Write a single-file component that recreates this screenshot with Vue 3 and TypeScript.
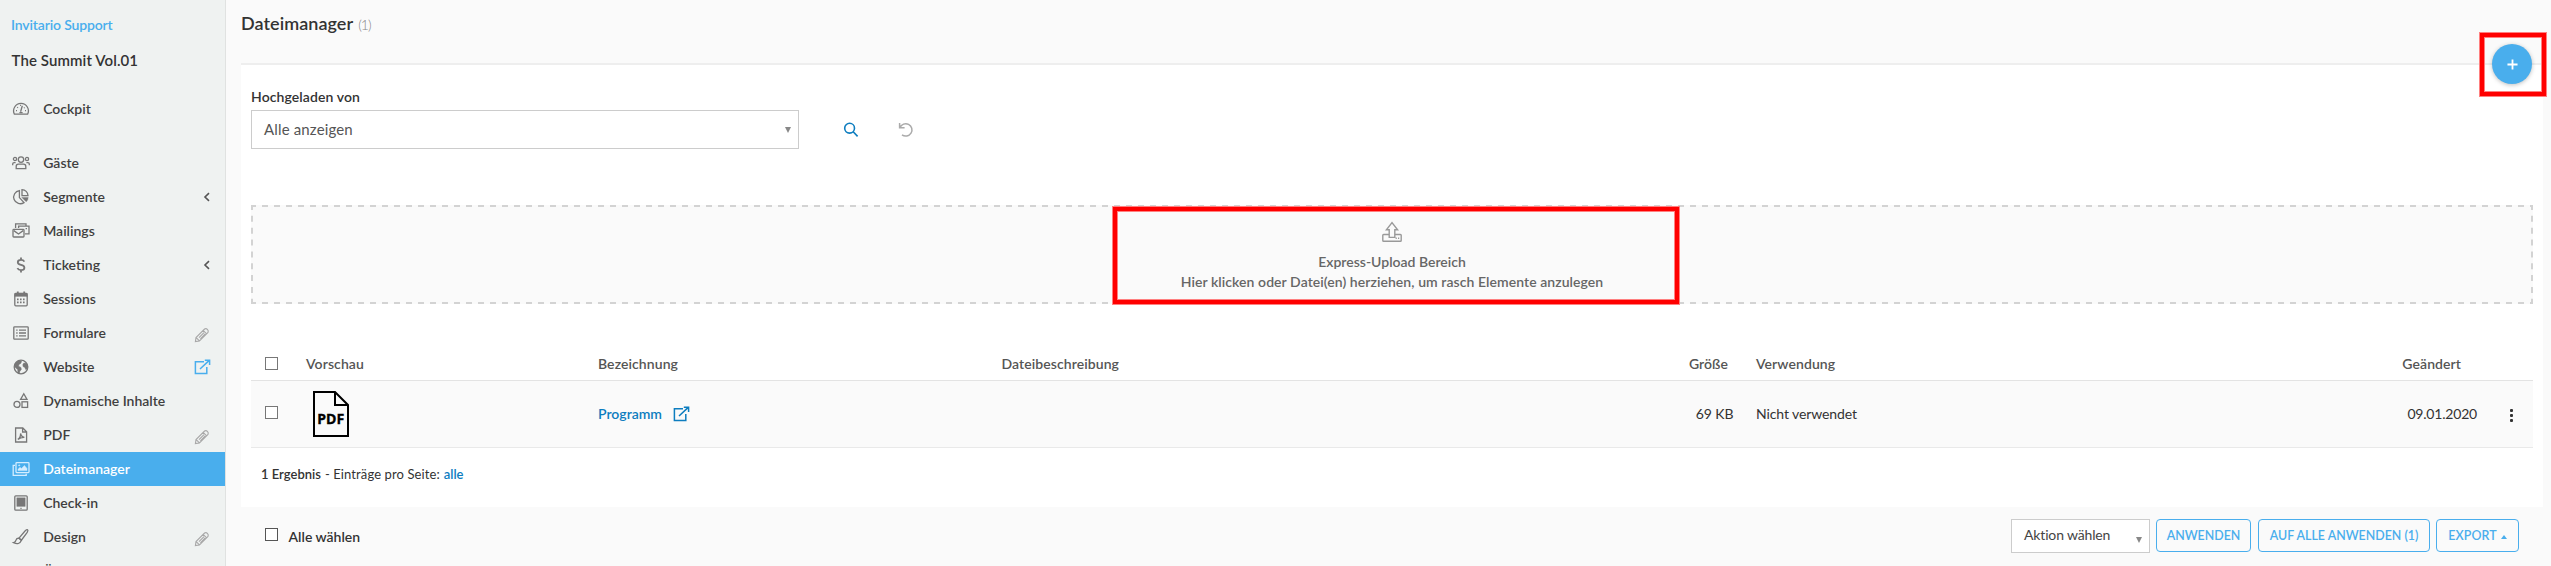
<script setup lang="ts">
interface NavItem {
  label: string
  icon: string
  tail?: 'chevron' | 'pencil' | 'external'
  active?: boolean
}

const nav: NavItem[] = [
  { label: 'Gäste', icon: 'guests' },
  { label: 'Segmente', icon: 'pie', tail: 'chevron' },
  { label: 'Mailings', icon: 'mail' },
  { label: 'Ticketing', icon: 'dollar', tail: 'chevron' },
  { label: 'Sessions', icon: 'calendar' },
  { label: 'Formulare', icon: 'form', tail: 'pencil' },
  { label: 'Website', icon: 'globe', tail: 'external' },
  { label: 'Dynamische Inhalte', icon: 'shapes' },
  { label: 'PDF', icon: 'pdf', tail: 'pencil' },
  { label: 'Dateimanager', icon: 'images', active: true },
  { label: 'Check-in', icon: 'tablet' },
  { label: 'Design', icon: 'brush', tail: 'pencil' },
  { label: 'Ü', icon: '' },
]
</script>

<template>
  <div class="app">
    <aside class="sidebar">
      <div class="account">Invitario Support</div>
      <div class="event">The Summit Vol.01</div>
      <div class="item cockpit">
        <svg class="ico" viewBox="0 0 18 18">
          <path d="M2.4 14.2A7.4 7.4 0 1 1 15.6 14.2Z" />
          <path d="M8.6 11.8 10.3 5.8M7.4 12.6h3.2M4 10.6h1M5.2 7.2l.8.6M8 5.3h.9M12.6 7.4l-.6.5M13 10.6h1" />
        </svg>
        <span>Cockpit</span>
      </div>
      <nav>
        <div v-for="item in nav" :key="item.label" class="item" :class="{ active: item.active }">
          <svg class="ico" viewBox="0 0 18 18">
            <g v-if="item.icon === 'guests'">
              <circle cx="9" cy="5.6" r="2.7" />
              <circle cx="3" cy="5" r="1.6" /><circle cx="15" cy="5" r="1.6" />
              <path d="M4.2 14.6v-2.2q0-2.2 2.2-2.2h5.2q2.2 0 2.2 2.2v2.2ZM.7 11.2V10q0-1.4 1.4-1.4h1.5M17.3 11.2V10q0-1.4-1.4-1.4h-1.5" />
            </g>
            <g v-else-if="item.icon === 'pie'">
              <path d="M7.4 2.6A6.6 6.6 0 1 0 12 14.6L7.4 9.6Z" />
              <path d="M10 1.6A6.2 6.2 0 0 1 16 7.6H10Z" />
              <path class="solid" d="M9.8 9.4h6.4a6.4 6.4 0 0 1-2 4.4Z" />
            </g>
            <g v-else-if="item.icon === 'mail'">
              <path d="M3.6 6V1.8H14V4M6.6 6V4.2H17v7.6h-4" />
              <rect x="1" y="7.4" width="11" height="7.6" rx=".8" />
              <path d="M1.8 8.6 6.5 12l4.7-3.4M13.6 6.6h1.4" />
            </g>
            <g v-else-if="item.icon === 'dollar'" class="bold">
              <path d="M12.4 5.6Q11.4 3.8 9 3.8 5.8 3.8 5.8 6.2 5.8 8.2 9 8.9 12.4 9.6 12.4 11.8 12.4 14.2 9 14.2 6.4 14.2 5.4 12.2M9 1.6v2.2M9 14.2v2.4" />
            </g>
            <g v-else-if="item.icon === 'calendar'">
              <rect x="2.8" y="3.4" width="12.4" height="12.4" rx="1" />
              <path class="solid" d="M2.8 3.4h12.4v3H2.8Z" />
              <path d="M5.8 1.4v3M12.2 1.4v3" class="bold" />
              <path class="dots" d="M5 9.4h8M5 12.4h8" />
            </g>
            <g v-else-if="item.icon === 'form'">
              <rect x="1.8" y="2.8" width="14.4" height="12.4" rx=".8" />
              <path d="M4.2 6.2h1.4M4.2 9h1.4M4.2 11.8h1.4M7 6.2h7M7 9h7M7 11.8h7" />
            </g>
            <g v-else-if="item.icon === 'globe'">
              <circle cx="9" cy="9" r="6.8" />
              <path class="solid" d="M3 5.4 6.4 2.6 9.6 3 9 5.2 7 6.6 6.6 8.2 9 9.4 9.4 11.4 7.8 13.4 7.4 15.6 6 14.8 5.6 11.6 3.2 9.4 2.4 7.6ZM11.8 5 14.6 5.2 15.8 8 15 11 13.6 11.4 12.8 9.4 11 8.6 10.8 6.6Z" />
            </g>
            <g v-else-if="item.icon === 'shapes'">
              <path d="M11.8 1.8 15 7.4H8.6Z" />
              <circle cx="5" cy="12.4" r="3" />
              <rect x="10" y="9.8" width="5.6" height="5.6" />
            </g>
            <g v-else-if="item.icon === 'pdf'">
              <path d="M3.6 2h7.2l3.8 3.8V16H3.6ZM10.6 2v4h4" />
              <path d="M5.8 13.4Q8.6 11.8 8.6 7.4 9 10.8 12.4 11.4 9 11.2 5.8 13.4Z" />
            </g>
            <g v-else-if="item.icon === 'images'">
              <path d="M3 5.4H1.2v10h13v-1.6" />
              <rect x="4" y="2.6" width="13" height="10" rx=".8" />
              <path class="solid" d="M6 10.6V9.2l2-2 1.4 1.4 3-3.2 2.6 3v2.2Z" />
              <circle class="solid" cx="7.2" cy="5.4" r=".7" />
            </g>
            <g v-else-if="item.icon === 'tablet'">
              <rect x="2.8" y="1.8" width="12.4" height="14.4" rx="1" />
              <path class="solid" d="M4.8 3.8h8.4v8.6H4.8Z" />
              <path d="M8.4 14.4h1.2" />
            </g>
            <g v-else-if="item.icon === 'brush'">
              <path d="M7 10.2 13 3q1.8-1.6 2.6-1.2.8.6-.4 2.6L9.4 12.2Z" />
              <path d="M7 10.2q-2.4-.2-3 2-.4 2-2.4 2.4 5.6 3 7.8-2.4Z" />
            </g>
          </svg>
          <span>{{ item.label }}</span>
          <svg v-if="item.tail === 'chevron'" class="tail chevron" viewBox="0 0 8 10"><path d="M6 1.2 2 5l4 3.8" /></svg>
          <svg v-else-if="item.tail === 'pencil'" class="tail pencil" viewBox="0 0 16 16">
            <path d="M1.4 14.6 2 10.6 10.6 2q1.4-1 2.8.4T14 5.4L5.4 14ZM9.2 3.4l3.4 3.4M2.2 10.6l3.2 3.2M5 10.6l5-5M6.4 11.8l4.8-4.8" />
          </svg>
          <svg v-else-if="item.tail === 'external'" class="tail external" viewBox="0 0 17 16">
            <path d="M10 2.8H1.4V14.4H12.8V8M6 10 15 1.6M10.8 1.2h4.8V6" />
          </svg>
        </div>
      </nav>
    </aside>

    <main class="main">
      <header class="head"><h1>Dateimanager</h1><small>(1)</small></header>
      <section class="panel">
        <label class="filter-label">Hochgeladen von</label>
        <div class="filters">
          <div class="select"><span>Alle anzeigen</span><i class="caret"></i></div>
          <svg class="search" viewBox="0 0 16 16"><circle cx="6.6" cy="6.2" r="4.9" /><path d="m10.2 9.8 4.4 4.6" /></svg>
          <svg class="undo" viewBox="0 0 16 16"><path d="M1.6 1v4.8h5M2 5.6A6.2 6.2 0 1 1 4 12.8" /></svg>
        </div>

        <div class="drop">
          <svg class="dashes" width="2282" height="99">
            <path d="M0 1H2282M0 98H2282" stroke-dasharray="6 6" stroke-dashoffset="1" />
            <path d="M1 0V99M2281 0V99" stroke-dasharray="6 5.85" stroke-dashoffset="1" />
          </svg>
          <svg class="upload" viewBox="0 0 22 22">
            <path d="M8 13.5H2.6q-.8 0-.8.8v5.2q0 .8.8.8h16.8q.8 0 .8-.8v-5.2q0-.8-.8-.8H14M8.2 16.4V8.8H5.4L11 1.6l5.6 7.2h-2.8v7.6ZM14.6 17.2h1.2M17 17.2h1.2" />
          </svg>
          <div class="drop-title">Express-Upload Bereich</div>
          <div class="drop-hint">Hier klicken oder Datei(en) herziehen, um rasch Elemente anzulegen</div>
          <div class="mark mark-drop"></div>
        </div>

        <div class="table">
          <div class="row thead">
            <i class="check"></i>
            <span>Vorschau</span>
            <span>Bezeichnung</span>
            <span class="desc">Dateibeschreibung</span>
            <span class="size">Größe</span>
            <span class="usage">Verwendung</span>
            <span class="date">Geändert</span>
          </div>
          <div class="row body">
            <i class="check"></i>
            <svg class="file" viewBox="0 0 36 46">
              <path d="M1 1H22L35 14V45H1ZM22 1V14H35" />
              <text x="4.2" y="33" textLength="27" lengthAdjust="spacingAndGlyphs">PDF</text>
            </svg>
            <a class="name">Programm
              <svg viewBox="0 0 17 16"><path d="M10 2.8H1.4V14.4H12.8V8M6 10 15 1.6M10.8 1.2h4.8V6" /></svg>
            </a>
            <span></span>
            <span class="size">69 KB</span>
            <span class="usage">Nicht verwendet</span>
            <span class="date">09.01.2020</span>
            <span class="more"><b></b><b></b><b></b></span>
          </div>
        </div>
        <div class="pager"><b>1 Ergebnis</b><span>- Einträge pro Seite:</span><a>alle</a></div>
        <div class="mark fab-wrap"><button class="fab"><svg viewBox="0 0 12 12"><path d="M6 .5v11M.5 6h11" /></svg></button></div>
      </section>

      <footer class="foot">
        <i class="check dark"></i>
        <span class="all">Alle wählen</span>
        <div class="action"><span>Aktion wählen</span><i class="caret"></i></div>
        <button class="btn apply">ANWENDEN</button>
        <button class="btn apply-all">AUF ALLE ANWENDEN (1)</button>
        <button class="btn export">EXPORT<i class="up"></i></button>
      </footer>
    </main>
  </div>
</template>

<style>
body {
  background: #fafafa;
  overflow: hidden;
}
</style>

<style scoped>
.app {
  display: flex;
  width: 2551px;
  height: 566px;
  overflow: hidden;
  background: #fafafa;
  font: 14px/20px Lato, 'Liberation Sans', sans-serif;
  color: #333;
}
.app *, .app *::before { box-sizing: border-box; }
svg { fill: none; stroke: currentColor; display: block; overflow: visible; }

.sidebar {
  flex: none;
  width: 226px;
  background: #eff2f1;
  border-right: 1px solid #e0e2e1;
  padding-top: 15px;
  font-weight: 600;
}
.account { padding-left: 11px; color: #49aeed; letter-spacing: -0.15px; }
.event { padding-left: 11.5px; margin-top: 15px; font-size: 15px; letter-spacing: 0.1px; }
.item { display: flex; align-items: center; height: 34px; padding: 0 14px 0 12px; color: #3f3f3f; }
.cockpit { margin: 22px 0 20px; }
.item span { margin-left: 13.2px; }
.item.active { background: #49aeed; color: #fff; }
.ico { width: 18px; height: 18px; flex: none; color: #777; stroke-width: 1.3; }
.active .ico { color: #d5edff; }
.ico .solid { fill: currentColor; stroke-width: .4; }
.ico .bold { stroke-width: 1.8; }
.ico .dots { stroke-width: 1.8; stroke-dasharray: 1.6 1.4; }
.tail { margin-left: auto; }
.chevron { width: 8px; height: 10px; stroke-width: 1.6; color: #555; }
.pencil { width: 16px; height: 16px; stroke-width: 1.1; color: #a8a8a8; margin-top: 3px; margin-right: 1px; }
.external { width: 17px; height: 16px; stroke-width: 1.5; color: #49aeed; }

.main { flex: 1; padding: 0 8px 0 15px; }
.head { display: flex; height: 63px; padding-top: 13px; align-items: baseline; }
h1 { margin: 0; font-size: 18px; line-height: 20px; font-weight: 600; letter-spacing: 0.05px; }
small { margin-left: 5px; font-size: 14px; color: #888; font-weight: 300; letter-spacing: -0.9px; }

.panel {
  position: relative;
  height: 444px;
  background: #fff;
  border-top: 2px solid #eee;
  padding: 22px 10px 0;
}
.filter-label { display: block; font-weight: 600; letter-spacing: 0.1px; }
.filters { display: flex; align-items: center; margin-top: 3px; height: 39px; }
.select {
  display: flex; align-items: center; justify-content: space-between;
  width: 548px; height: 39px; padding: 0 7px 1px 12px;
  border: 1px solid #ccc; background: #fff;
  font-size: 15px; letter-spacing: 0.15px; color: #555;
}
.caret { border: 3.5px solid transparent; border-top: 6px solid #888; border-bottom: 0; }
.select .caret { margin-top: 2px; }
.search { width: 16px; height: 16px; margin-left: 44px; stroke-width: 1.6; color: #0d7dbf; }
.undo { width: 16px; height: 16px; margin-left: 39px; stroke-width: 1.5; color: #aaa; }

.drop {
  position: relative;
  height: 99px; margin-top: 56px; padding-top: 16px;
  background: #fafafa; color: #666; font-weight: 600; text-align: center;
}
.dashes { position: absolute; left: 0; top: 0; stroke: #d3d3d3; stroke-width: 2; }
.upload { width: 22px; height: 22px; margin: 0 auto 9px; stroke-width: 1.4; color: #999; }
.drop-hint { letter-spacing: 0.065px; }
.mark {
  position: absolute; border: 1px solid #ff8080; pointer-events: none;
  box-shadow: inset 0 0 0 4px #f00, inset 0 0 0 5px #ff8080;
}
.mark-drop { left: 860.5px; top: 1px; width: 568px; height: 99px; }

.table { margin-top: 44px; }
.row {
  display: grid; align-items: center;
  grid-template-columns: 55px 292px 403.5px 638.5px 93px 647px 97px 1fr;
}
.thead { height: 33px; border-bottom: 1px solid #e3e3e3; color: #555; font-weight: 600; padding-bottom: 1px; }
.thead span { letter-spacing: 0.08px; }
.body { height: 67px; background: #fafafa; border-bottom: 1px solid #e9e9e9; }
.check { display: block; width: 13px; height: 13px; margin-left: 14px; border: 1px solid #777; background: #fff; }
.thead .check { margin-top: -1px; }
.body .check { margin-top: -3px; }
.size { text-align: right; }
.thead .size { padding-right: 5px; }
.body .size { letter-spacing: -0.1px; margin-right: -0.5px; }
.usage { padding-left: 23px; }
.date { text-align: right; }
.body .date { letter-spacing: -0.2px; }
.body .usage { letter-spacing: -0.1px; }
.thead .date { padding-right: 16px; }
.file { width: 36px; height: 46px; margin-left: 7px; color: #000; stroke-width: 2; }
.file text { font: 700 14px 'Noto Sans', sans-serif; fill: #000; stroke: #000; stroke-width: .3; }
.name { display: flex; align-items: center; gap: 11px; color: #0d7dbf; font-weight: 600; }
.name svg { width: 17px; height: 16px; stroke-width: 1.5; }
.more { display: flex; flex-direction: column; align-items: center; gap: 2px; margin-left: 14.5px; width: 40px; padding-top: 2px; }
.more b { width: 3px; height: 3px; border-radius: 1px; background: #333; }

.pager { display: flex; gap: 4px; margin: 16px 0 0 10px; font-size: 13px; }
.pager b { font-weight: 600; }
.pager span { letter-spacing: 0.1px; }
.pager a { color: #0d7dbf; font-weight: 600; }

.fab-wrap {
  right: -4px; top: -33px; width: 68px; height: 65px;
  display: flex; align-items: center; justify-content: center;
}
.fab {
  width: 40px; height: 40px; padding: 0; border: 0; border-radius: 50%; margin: 0 2px 1px 0;
  display: flex; align-items: center; justify-content: center;
  background: #49aeed; color: #fff; box-shadow: 0 1px 4px rgba(0, 0, 0, .25);
}
.fab svg { width: 11px; height: 11px; stroke-width: 2; }

.foot { display: flex; padding: 12px 24px 0; align-items: flex-start; }
.foot .check { margin: 9px 10.5px 0 0; border-color: #555; }
.all { font-weight: 600; margin-top: 8px; }
.action {
  display: flex; justify-content: space-between; width: 139px; height: 34px; margin-left: auto;
  border: 1px solid #ccc; background: #fff; padding: 5px 7px 0 12px; color: #444; letter-spacing: -0.15px;
}
.action .caret { height: 6px; margin-top: 12px; }
.btn {
  display: flex; align-items: center; justify-content: center; height: 33px; padding: 0;
  border: 1px solid #49aeed; border-radius: 4px; background: transparent; color: #49aeed;
  font: 600 12.4px/20px Lato, sans-serif;
}
.apply { width: 95px; margin-left: 6px; }
.apply-all { width: 172px; margin-left: 7px; }
.export { width: 83px; margin-left: 6px; letter-spacing: 0.1px; }
.up { margin: 3px 0 0 4px; border: 3.5px solid transparent; border-bottom: 4px solid #49aeed; border-top: 0; }
.foot .check { margin-left: 0; }
</style>
